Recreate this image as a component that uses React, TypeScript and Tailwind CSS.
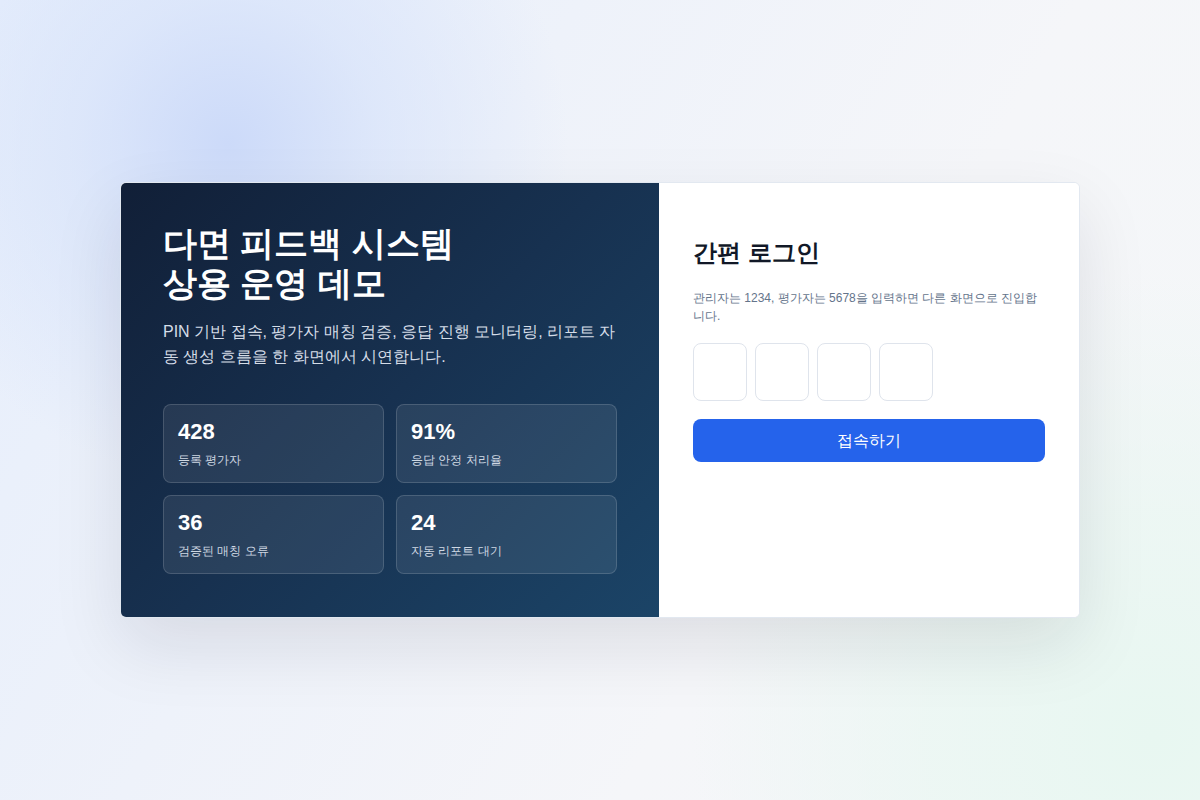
import React from "react";

const stats = [
  { value: "428", label: "등록 평가자" },
  { value: "91%", label: "응답 안정 처리율" },
  { value: "36", label: "검증된 매칭 오류" },
  { value: "24", label: "자동 리포트 대기" },
];

export default function App() {
  return (
    <div
      className="min-h-screen w-full flex items-center justify-center bg-[#f5f7fa] bg-[radial-gradient(circle_at_19%_18%,#ccdaf9_0px,rgba(214,226,250,0.65)_150px,rgba(244,246,250,0)_340px),radial-gradient(circle_at_96%_92%,#e8f7f1_0px,rgba(234,247,242,0.75)_220px,rgba(244,246,250,0)_460px),linear-gradient(120deg,#e6eefc_0%,#eef2fa_35%,#f5f6f9_65%,#f4f7f8_100%)]"
      style={{ fontFamily: "Arial, sans-serif" }}
    >
      <div className="w-[960px] h-[436px] flex rounded-md border border-[#e2e8f0] bg-white overflow-hidden shadow-[0_28px_70px_rgba(15,23,42,0.1)]">
        <div className="w-[538px] shrink-0 px-[42px] pt-10 bg-[linear-gradient(135deg,#111f37_0%,#173150_50%,#1b4467_100%)]">
          <h1 className="text-[34px] leading-[40px] font-bold text-white">
            다면 피드백 시스템
            <br />
            상용 운영 데모
          </h1>
          <p className="mt-4 text-base leading-[25px] text-[#d5dde8]">
            PIN 기반 접속, 평가자 매칭 검증, 응답 진행 모니터링, 리포트 자동 생성 흐름을 한 화면에서 시연합니다.
          </p>
          <div className="mt-[35px] grid grid-cols-2 gap-3">
            {stats.map((s) => (
              <div
                key={s.label}
                className="h-[79px] rounded-lg border border-white/15 bg-white/[0.08] px-[14px] pt-[14px]"
              >
                <div className="text-[22px] leading-[26px] font-bold text-white">{s.value}</div>
                <div className="mt-[7px] text-xs leading-4 text-[#cfd8e3]">{s.label}</div>
              </div>
            ))}
          </div>
        </div>
        <div className="flex-1 px-[34px] pt-[54px] bg-white">
          <h2 className="text-2xl leading-8 font-bold text-[#111827]">간편 로그인</h2>
          <p className="mt-5 text-xs leading-[18px] text-[#64748b]">
            관리자는 1234, 평가자는 5678을 입력하면 다른 화면으로 진입합니다.
          </p>
          <div className="mt-[18px] flex gap-2">
            {[0, 1, 2, 3].map((i) => (
              <div key={i} className="w-[54px] h-[58px] rounded-lg border border-[#dfe4ec] bg-white" />
            ))}
          </div>
          <button className="mt-[18px] w-full h-[43px] rounded-lg bg-[#2563eb] text-white text-base">
            접속하기
          </button>
        </div>
      </div>
    </div>
  );
}
